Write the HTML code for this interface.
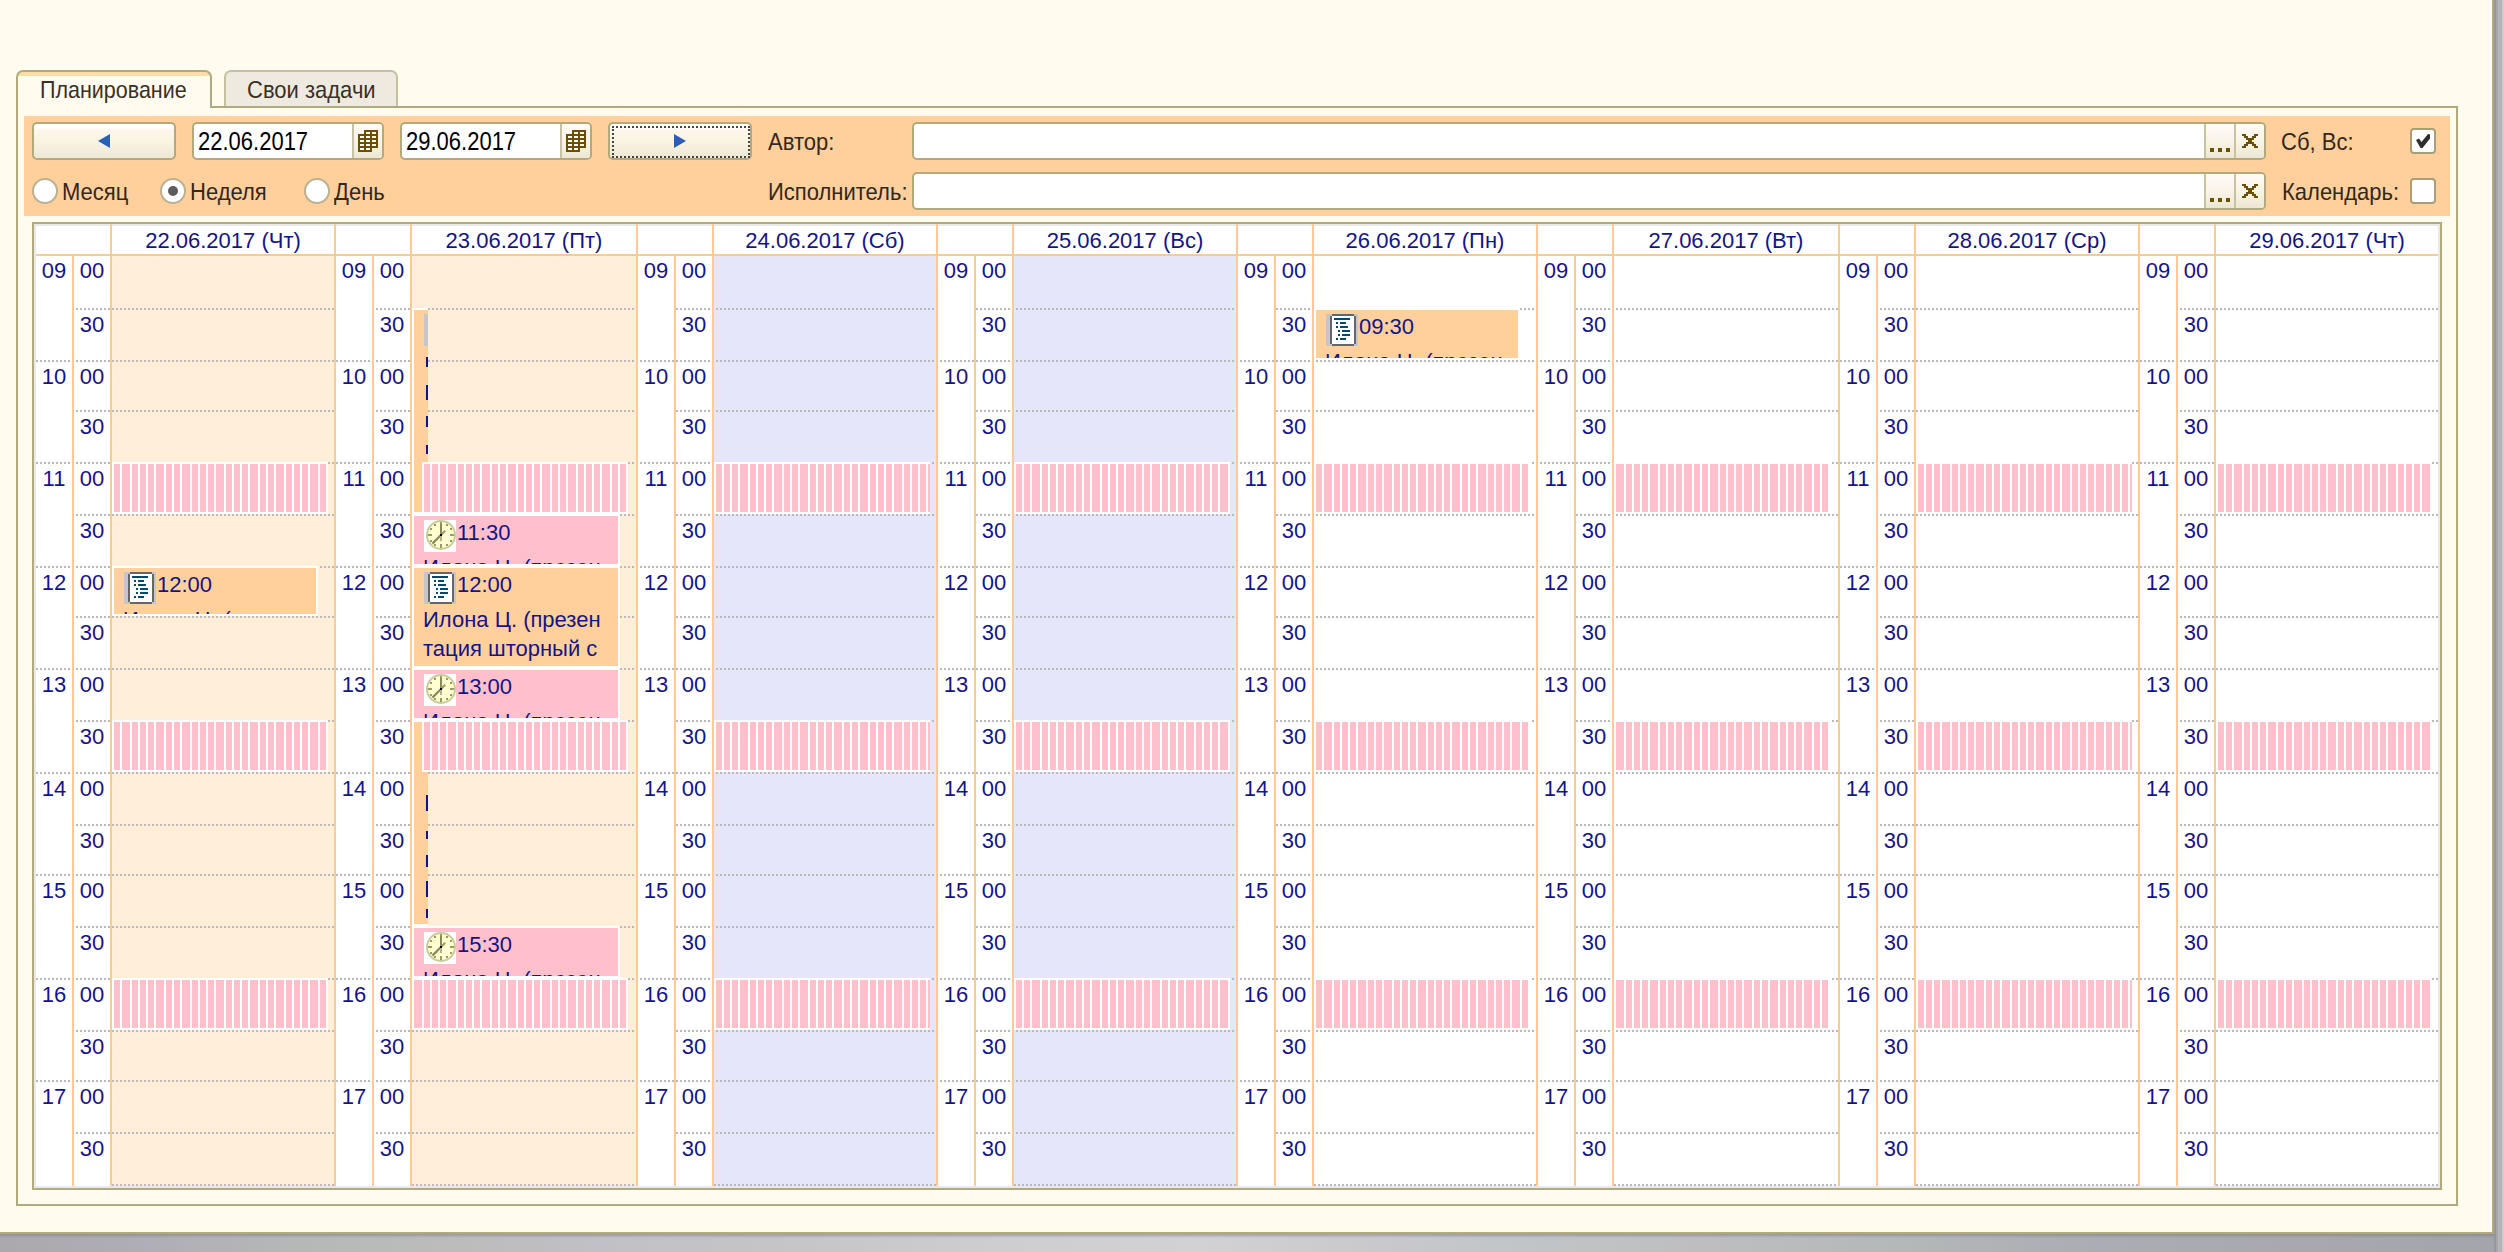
<!DOCTYPE html>
<html lang="ru"><head><meta charset="utf-8"><title>Планирование</title>
<style>
html,body{margin:0;padding:0}
body{width:2504px;height:1252px;position:relative;overflow:hidden;background:#FFFBEE;font-family:"Liberation Sans",sans-serif;font-size:22px;color:#2a2118}
.a{position:absolute}
.v{position:absolute;width:2px;background:#FFC993}
.t{position:absolute;color:#141489;font-size:22px;line-height:26px;text-align:center;white-space:nowrap}
.lbl{position:absolute;font-size:22px;line-height:26px;white-space:nowrap;color:#33281c;transform-origin:0 100%;transform:scaleY(1.1)}
.dots{position:absolute;height:2px;background-image:repeating-linear-gradient(to right,#BABABA 0 2px,transparent 2px 4px)}
.fld{position:absolute;box-sizing:border-box;border:2px solid #B1AA7E;border-radius:5px;background:#fff;height:38px;overflow:hidden}
.btn{position:absolute;box-sizing:border-box;border:2px solid #B1AA7E;border-radius:5px;height:38px;background:linear-gradient(to bottom,#fff 0,#fff 4px,#FFF6EE 5px,#F8F5E2 16px,#F5EFDC 24px,#EDE8D6 33px,#F4F0E2 34px)}
.sb{position:absolute;top:0;height:34px;border-left:2px solid #C9C2A2;background:linear-gradient(to bottom,#FFFBF6 0,#FBF6EC 12px,#F6F1E0 22px,#ECE7D4 34px)}
.ev{position:absolute;box-sizing:border-box;border:2px solid #fff;overflow:hidden;color:#141489;font-size:22px;line-height:28px;white-space:nowrap}
.ev.o{background:#FFCF9C} .ev.p{background:#FFC0CB}
.st{position:absolute;height:52px;box-sizing:border-box;border-top:2px solid #fff;border-bottom:2px solid #fff;width:216px;background-color:#fff}
.ic{position:absolute;left:10px;top:4px;width:32px;height:32px}
.tm{position:absolute;left:43px;top:4px;line-height:26px}
.l2{position:absolute;left:9px;top:38px;line-height:28px}
.rad{position:absolute;box-sizing:border-box;width:26px;height:26px;border-radius:13px;border:2px solid #B9B292;background:#fff}
.chk{position:absolute;box-sizing:border-box;width:26px;height:26px;border-radius:4px;border:2px solid #A89F78;background:#fff}

.s0{background-image:linear-gradient(to right,#fff 0 2px,#FFC0CB 2px 8px,#fff 8px 10px,#FFC0CB 10px 18px,#fff 18px 20px,#FFC0CB 20px 26px,#fff 26px 28px,#FFC0CB 28px 34px,#fff 34px 36px,#FFC0CB 36px 42px,#fff 42px 44px,#FFC0CB 44px 52px,#fff 52px 54px,#FFC0CB 54px 60px,#fff 60px 62px,#FFC0CB 62px 68px,#fff 68px 70px,#FFC0CB 70px 78px,#fff 78px 80px,#FFC0CB 80px 86px,#fff 86px 88px,#FFC0CB 88px 94px,#fff 94px 96px,#FFC0CB 96px 102px,#fff 102px 104px,#FFC0CB 104px 112px,#fff 112px 114px,#FFC0CB 114px 120px,#fff 120px 122px,#FFC0CB 122px 128px,#fff 128px 130px,#FFC0CB 130px 136px,#fff 136px 138px,#FFC0CB 138px 146px,#fff 146px 148px,#FFC0CB 148px 154px,#fff 154px 156px,#FFC0CB 156px 162px,#fff 162px 164px,#FFC0CB 164px 172px,#fff 172px 174px,#FFC0CB 174px 180px,#fff 180px 182px,#FFC0CB 182px 188px,#fff 188px 190px,#FFC0CB 190px 196px,#fff 196px 198px,#FFC0CB 198px 206px,#fff 206px 208px,#FFC0CB 208px 214px,#fff 214px 216px)}
.s1{background-image:linear-gradient(to right,#fff 0 2px,#FFC0CB 2px 10px,#fff 10px 12px,#FFC0CB 12px 18px,#fff 18px 20px,#FFC0CB 20px 26px,#fff 26px 28px,#FFC0CB 28px 34px,#fff 34px 36px,#FFC0CB 36px 44px,#fff 44px 46px,#FFC0CB 46px 52px,#fff 52px 54px,#FFC0CB 54px 60px,#fff 60px 62px,#FFC0CB 62px 68px,#fff 68px 70px,#FFC0CB 70px 78px,#fff 78px 80px,#FFC0CB 80px 86px,#fff 86px 88px,#FFC0CB 88px 94px,#fff 94px 96px,#FFC0CB 96px 104px,#fff 104px 106px,#FFC0CB 106px 112px,#fff 112px 114px,#FFC0CB 114px 120px,#fff 120px 122px,#FFC0CB 122px 128px,#fff 128px 130px,#FFC0CB 130px 138px,#fff 138px 140px,#FFC0CB 140px 146px,#fff 146px 148px,#FFC0CB 148px 154px,#fff 154px 156px,#FFC0CB 156px 164px,#fff 164px 166px,#FFC0CB 166px 172px,#fff 172px 174px,#FFC0CB 174px 180px,#fff 180px 182px,#FFC0CB 182px 188px,#fff 188px 190px,#FFC0CB 190px 198px,#fff 198px 200px,#FFC0CB 200px 206px,#fff 206px 208px,#FFC0CB 208px 214px,#fff 214px 216px)}
.s2{background-image:linear-gradient(to right,#fff 0 2px,#FFC0CB 2px 8px,#fff 8px 10px,#FFC0CB 10px 16px,#fff 16px 18px,#FFC0CB 18px 24px,#fff 24px 26px,#FFC0CB 26px 34px,#fff 34px 36px,#FFC0CB 36px 42px,#fff 42px 44px,#FFC0CB 44px 50px,#fff 50px 52px,#FFC0CB 52px 58px,#fff 58px 60px,#FFC0CB 60px 68px,#fff 68px 70px,#FFC0CB 70px 76px,#fff 76px 78px,#FFC0CB 78px 84px,#fff 84px 86px,#FFC0CB 86px 94px,#fff 94px 96px,#FFC0CB 96px 102px,#fff 102px 104px,#FFC0CB 104px 110px,#fff 110px 112px,#FFC0CB 112px 118px,#fff 118px 120px,#FFC0CB 120px 128px,#fff 128px 130px,#FFC0CB 130px 136px,#fff 136px 138px,#FFC0CB 138px 144px,#fff 144px 146px,#FFC0CB 146px 154px,#fff 154px 156px,#FFC0CB 156px 162px,#fff 162px 164px,#FFC0CB 164px 170px,#fff 170px 172px,#FFC0CB 172px 178px,#fff 178px 180px,#FFC0CB 180px 188px,#fff 188px 190px,#FFC0CB 190px 196px,#fff 196px 198px,#FFC0CB 198px 204px,#fff 204px 206px,#FFC0CB 206px 212px,#fff 212px 214px,#FFC0CB 214px 220px,#fff 220px 222px)}
.s3{background-image:linear-gradient(to right,#fff 0 2px,#FFC0CB 2px 8px,#fff 8px 10px,#FFC0CB 10px 16px,#fff 16px 18px,#FFC0CB 18px 26px,#fff 26px 28px,#FFC0CB 28px 34px,#fff 34px 36px,#FFC0CB 36px 42px,#fff 42px 44px,#FFC0CB 44px 50px,#fff 50px 52px,#FFC0CB 52px 60px,#fff 60px 62px,#FFC0CB 62px 68px,#fff 68px 70px,#FFC0CB 70px 76px,#fff 76px 78px,#FFC0CB 78px 86px,#fff 86px 88px,#FFC0CB 88px 94px,#fff 94px 96px,#FFC0CB 96px 102px,#fff 102px 104px,#FFC0CB 104px 110px,#fff 110px 112px,#FFC0CB 112px 120px,#fff 120px 122px,#FFC0CB 122px 128px,#fff 128px 130px,#FFC0CB 130px 136px,#fff 136px 138px,#FFC0CB 138px 146px,#fff 146px 148px,#FFC0CB 148px 154px,#fff 154px 156px,#FFC0CB 156px 162px,#fff 162px 164px,#FFC0CB 164px 170px,#fff 170px 172px,#FFC0CB 172px 180px,#fff 180px 182px,#FFC0CB 182px 188px,#fff 188px 190px,#FFC0CB 190px 196px,#fff 196px 198px,#FFC0CB 198px 204px,#fff 204px 206px,#FFC0CB 206px 214px,#fff 214px 216px)}
.s4{background-image:linear-gradient(to right,#fff 0 2px,#FFC0CB 2px 8px,#fff 8px 10px,#FFC0CB 10px 18px,#fff 18px 20px,#FFC0CB 20px 26px,#fff 26px 28px,#FFC0CB 28px 34px,#fff 34px 36px,#FFC0CB 36px 42px,#fff 42px 44px,#FFC0CB 44px 52px,#fff 52px 54px,#FFC0CB 54px 60px,#fff 60px 62px,#FFC0CB 62px 68px,#fff 68px 70px,#FFC0CB 70px 78px,#fff 78px 80px,#FFC0CB 80px 86px,#fff 86px 88px,#FFC0CB 88px 94px,#fff 94px 96px,#FFC0CB 96px 102px,#fff 102px 104px,#FFC0CB 104px 112px,#fff 112px 114px,#FFC0CB 114px 120px,#fff 120px 122px,#FFC0CB 122px 128px,#fff 128px 130px,#FFC0CB 130px 136px,#fff 136px 138px,#FFC0CB 138px 146px,#fff 146px 148px,#FFC0CB 148px 154px,#fff 154px 156px,#FFC0CB 156px 162px,#fff 162px 164px,#FFC0CB 164px 172px,#fff 172px 174px,#FFC0CB 174px 180px,#fff 180px 182px,#FFC0CB 182px 188px,#fff 188px 190px,#FFC0CB 190px 196px,#fff 196px 198px,#FFC0CB 198px 206px,#fff 206px 208px,#FFC0CB 208px 214px,#fff 214px 216px)}
.s5{background-image:linear-gradient(to right,#fff 0 2px,#FFC0CB 2px 10px,#fff 10px 12px,#FFC0CB 12px 18px,#fff 18px 20px,#FFC0CB 20px 26px,#fff 26px 28px,#FFC0CB 28px 34px,#fff 34px 36px,#FFC0CB 36px 44px,#fff 44px 46px,#FFC0CB 46px 52px,#fff 52px 54px,#FFC0CB 54px 60px,#fff 60px 62px,#FFC0CB 62px 68px,#fff 68px 70px,#FFC0CB 70px 78px,#fff 78px 80px,#FFC0CB 80px 86px,#fff 86px 88px,#FFC0CB 88px 94px,#fff 94px 96px,#FFC0CB 96px 104px,#fff 104px 106px,#FFC0CB 106px 112px,#fff 112px 114px,#FFC0CB 114px 120px,#fff 120px 122px,#FFC0CB 122px 128px,#fff 128px 130px,#FFC0CB 130px 138px,#fff 138px 140px,#FFC0CB 140px 146px,#fff 146px 148px,#FFC0CB 148px 154px,#fff 154px 156px,#FFC0CB 156px 164px,#fff 164px 166px,#FFC0CB 166px 172px,#fff 172px 174px,#FFC0CB 174px 180px,#fff 180px 182px,#FFC0CB 182px 188px,#fff 188px 190px,#FFC0CB 190px 198px,#fff 198px 200px,#FFC0CB 200px 206px,#fff 206px 208px,#FFC0CB 208px 214px,#fff 214px 216px)}
.s6{background-image:linear-gradient(to right,#fff 0 2px,#FFC0CB 2px 8px,#fff 8px 10px,#FFC0CB 10px 16px,#fff 16px 18px,#FFC0CB 18px 24px,#fff 24px 26px,#FFC0CB 26px 34px,#fff 34px 36px,#FFC0CB 36px 42px,#fff 42px 44px,#FFC0CB 44px 50px,#fff 50px 52px,#FFC0CB 52px 58px,#fff 58px 60px,#FFC0CB 60px 68px,#fff 68px 70px,#FFC0CB 70px 76px,#fff 76px 78px,#FFC0CB 78px 84px,#fff 84px 86px,#FFC0CB 86px 94px,#fff 94px 96px,#FFC0CB 96px 102px,#fff 102px 104px,#FFC0CB 104px 110px,#fff 110px 112px,#FFC0CB 112px 118px,#fff 118px 120px,#FFC0CB 120px 128px,#fff 128px 130px,#FFC0CB 130px 136px,#fff 136px 138px,#FFC0CB 138px 144px,#fff 144px 146px,#FFC0CB 146px 154px,#fff 154px 156px,#FFC0CB 156px 162px,#fff 162px 164px,#FFC0CB 164px 170px,#fff 170px 172px,#FFC0CB 172px 178px,#fff 178px 180px,#FFC0CB 180px 188px,#fff 188px 190px,#FFC0CB 190px 196px,#fff 196px 198px,#FFC0CB 198px 204px,#fff 204px 206px,#FFC0CB 206px 212px,#fff 212px 214px,#FFC0CB 214px 220px,#fff 220px 222px)}
.s7{background-image:linear-gradient(to right,#fff 0 2px,#FFC0CB 2px 8px,#fff 8px 10px,#FFC0CB 10px 16px,#fff 16px 18px,#FFC0CB 18px 26px,#fff 26px 28px,#FFC0CB 28px 34px,#fff 34px 36px,#FFC0CB 36px 42px,#fff 42px 44px,#FFC0CB 44px 50px,#fff 50px 52px,#FFC0CB 52px 60px,#fff 60px 62px,#FFC0CB 62px 68px,#fff 68px 70px,#FFC0CB 70px 76px,#fff 76px 78px,#FFC0CB 78px 86px,#fff 86px 88px,#FFC0CB 88px 94px,#fff 94px 96px,#FFC0CB 96px 102px,#fff 102px 104px,#FFC0CB 104px 110px,#fff 110px 112px,#FFC0CB 112px 120px,#fff 120px 122px,#FFC0CB 122px 128px,#fff 128px 130px,#FFC0CB 130px 136px,#fff 136px 138px,#FFC0CB 138px 146px,#fff 146px 148px,#FFC0CB 148px 154px,#fff 154px 156px,#FFC0CB 156px 162px,#fff 162px 164px,#FFC0CB 164px 170px,#fff 170px 172px,#FFC0CB 172px 180px,#fff 180px 182px,#FFC0CB 182px 188px,#fff 188px 190px,#FFC0CB 190px 196px,#fff 196px 198px,#FFC0CB 198px 204px,#fff 204px 206px,#FFC0CB 206px 214px,#fff 214px 216px)}
</style></head><body>
<div class="a" style="left:0;top:1234px;width:2504px;height:18px;background:linear-gradient(to right,#ABA9AD 0,#B0AEB6 150px,#B6B8B8 300px,#BCBCBC 450px,#C0C0C6 600px,#C6C6C8 800px,#CECED0 1000px,#D2D2D4 1200px,#C8C8CC 1400px,#C2C6C8 1500px,#BEBEC0 1700px,#B4B8B8 1900px,#ACACB4 2100px,#A8A8AE 2300px,#A4A4AC 2504px)"></div>
<div class="a" style="left:0;top:1234px;width:2496px;height:4px;background:linear-gradient(to bottom,rgba(120,120,132,.55),rgba(120,120,132,0))"></div>
<div class="a" style="left:2494px;top:0;width:10px;height:1252px;background:linear-gradient(to right,#96969E 0,#96969E 2px,#A8A8AC 2px,#A8A8AC 4px,#B6B6B6 4px,#B6B6B6 6px,#B0B4B8 6px,#B0B4B8 8px,#CCCCD0 8px)"></div>
<div class="a" style="left:0;top:1232px;width:2494px;height:2px;background:#B1AA7E"></div>
<div class="a" style="left:2492px;top:0;width:2px;height:1234px;background:#B1AA7E"></div>
<div class="a" style="left:16px;top:106px;width:2442px;height:1100px;box-sizing:border-box;border:2px solid #B1AA7E"></div>
<div class="a" style="left:224px;top:70px;width:174px;height:36px;box-sizing:border-box;border:2px solid #C6BFA0;border-bottom:none;border-radius:7px 7px 0 0;background:#EEEADF"></div>
<div class="lbl" style="left:247px;top:79px;color:#3a3026">Свои задачи</div>
<div class="a" style="left:16px;top:70px;width:196px;height:38px;box-sizing:border-box;border:2px solid #B1AA7E;border-bottom:none;border-radius:7px 7px 0 0;background:linear-gradient(to bottom,#FFDDA6 0,#FFDDA6 4px,#FFFBEE 4px);"></div>
<div class="a" style="left:18px;top:106px;width:192px;height:2px;background:#FFFBEE"></div>
<div class="lbl" style="left:40px;top:79px;color:#3a3026;transform:scale(0.977,1.1)">Планирование</div>
<div class="a" style="left:24px;top:116px;width:2426px;height:100px;background:#FFCF9C"></div>
<div class="btn" style="left:32px;top:122px;width:144px"></div>
<svg class="a" style="left:98px;top:134px" width="12" height="14" viewBox="0 0 12 14"><path d="M12 0V14L0 7Z" fill="#2C5EB8"/></svg>
<div class="fld" style="left:192px;top:122px;width:192px"><div class="lbl" style="left:4px;top:7px;color:#000;transform:scaleY(1.14)">22.06.2017</div><div class="sb" style="left:158px;width:30px"></div>
<svg class="a" style="left:164px;top:6px" width="20" height="22" viewBox="0 0 10 11" shape-rendering="crispEdges"><path fill="#6B4E00" d="M3 0h7v9h-3v2h-7v-9h3z"/><rect x="4" y="1" width="2" height="1" fill="#FFFDF6"/><rect x="7" y="1" width="2" height="1" fill="#FFFDF6"/><rect x="1" y="3" width="2" height="1" fill="#FFFDF6"/><rect x="4" y="3" width="2" height="1" fill="#FFFDF6"/><rect x="7" y="3" width="2" height="1" fill="#FFFDF6"/><rect x="1" y="5" width="2" height="1" fill="#FFFDF6"/><rect x="4" y="5" width="2" height="1" fill="#FFFDF6"/><rect x="7" y="5" width="2" height="1" fill="#FFFDF6"/><rect x="1" y="7" width="2" height="1" fill="#FFFDF6"/><rect x="4" y="7" width="2" height="1" fill="#FFFDF6"/><rect x="7" y="7" width="2" height="1" fill="#FFFDF6"/><rect x="1" y="9" width="2" height="1" fill="#FFFDF6"/><rect x="4" y="9" width="2" height="1" fill="#FFFDF6"/></svg></div>
<div class="fld" style="left:400px;top:122px;width:192px"><div class="lbl" style="left:4px;top:7px;color:#000;transform:scaleY(1.14)">29.06.2017</div><div class="sb" style="left:158px;width:30px"></div>
<svg class="a" style="left:164px;top:6px" width="20" height="22" viewBox="0 0 10 11" shape-rendering="crispEdges"><path fill="#6B4E00" d="M3 0h7v9h-3v2h-7v-9h3z"/><rect x="4" y="1" width="2" height="1" fill="#FFFDF6"/><rect x="7" y="1" width="2" height="1" fill="#FFFDF6"/><rect x="1" y="3" width="2" height="1" fill="#FFFDF6"/><rect x="4" y="3" width="2" height="1" fill="#FFFDF6"/><rect x="7" y="3" width="2" height="1" fill="#FFFDF6"/><rect x="1" y="5" width="2" height="1" fill="#FFFDF6"/><rect x="4" y="5" width="2" height="1" fill="#FFFDF6"/><rect x="7" y="5" width="2" height="1" fill="#FFFDF6"/><rect x="1" y="7" width="2" height="1" fill="#FFFDF6"/><rect x="4" y="7" width="2" height="1" fill="#FFFDF6"/><rect x="7" y="7" width="2" height="1" fill="#FFFDF6"/><rect x="1" y="9" width="2" height="1" fill="#FFFDF6"/><rect x="4" y="9" width="2" height="1" fill="#FFFDF6"/></svg></div>
<div class="btn" style="left:608px;top:122px;width:144px"><div class="a" style="left:2px;top:2px;width:134px;height:28px;border:2px dotted #444"></div></div>
<svg class="a" style="left:674px;top:134px" width="12" height="14" viewBox="0 0 12 14"><path d="M0 0V14L12 7Z" fill="#2C5EB8"/></svg>
<div class="lbl" style="left:768px;top:131px">Автор:</div>
<div class="lbl" style="left:768px;top:181px">Исполнитель:</div>
<div class="fld" style="left:912px;top:122px;width:1354px"><div class="sb" style="left:1290px;width:28px"></div><div class="sb" style="left:1320px;width:30px"></div><div class="a" style="left:1296px;top:24px;width:4px;height:4px;background:#6B5000"></div><div class="a" style="left:1304px;top:24px;width:4px;height:4px;background:#6B5000"></div><div class="a" style="left:1312px;top:24px;width:4px;height:4px;background:#6B5000"></div><svg class="a" style="left:1328px;top:10px" width="16" height="14" viewBox="0 0 8 7" shape-rendering="crispEdges"><path fill="#6B5000" d="M0 0h2v1h-2zM6 0h2v1h-2zM1 1h2v1h-2zM5 1h2v1h-2zM2 2h4v1h-4zM3 3h2v1h-2zM2 4h4v1h-4zM1 5h2v1h-2zM5 5h2v1h-2zM0 6h2v1h-2zM6 6h2v1h-2z"/></svg></div>
<div class="fld" style="left:912px;top:172px;width:1354px"><div class="sb" style="left:1290px;width:28px"></div><div class="sb" style="left:1320px;width:30px"></div><div class="a" style="left:1296px;top:24px;width:4px;height:4px;background:#6B5000"></div><div class="a" style="left:1304px;top:24px;width:4px;height:4px;background:#6B5000"></div><div class="a" style="left:1312px;top:24px;width:4px;height:4px;background:#6B5000"></div><svg class="a" style="left:1328px;top:10px" width="16" height="14" viewBox="0 0 8 7" shape-rendering="crispEdges"><path fill="#6B5000" d="M0 0h2v1h-2zM6 0h2v1h-2zM1 1h2v1h-2zM5 1h2v1h-2zM2 2h4v1h-4zM3 3h2v1h-2zM2 4h4v1h-4zM1 5h2v1h-2zM5 5h2v1h-2zM0 6h2v1h-2zM6 6h2v1h-2z"/></svg></div>
<div class="lbl" style="left:2281px;top:131px">Сб, Вс:</div>
<div class="lbl" style="left:2282px;top:181px">Календарь:</div>
<div class="chk" style="left:2410px;top:128px"><svg class="a" style="left:4px;top:4px" width="14" height="14" viewBox="0 0 14 14"><path d="M0 6L3 4.5L5.5 8L12 0L14 0.5L14 4.5L6.5 14L4.5 14Z" fill="#2e2e30"/></svg></div>
<div class="chk" style="left:2410px;top:178px"></div>
<div class="rad" style="left:32px;top:178px"></div><div class="lbl" style="left:62px;top:181px">Месяц</div>
<div class="rad" style="left:160px;top:178px"><div class="a" style="left:6px;top:6px;width:10px;height:10px;border-radius:5px;background:#5c5c5e"></div></div><div class="lbl" style="left:190px;top:181px">Неделя</div>
<div class="rad" style="left:304px;top:178px"></div><div class="lbl" style="left:334px;top:181px">День</div>
<div class="a" style="left:32px;top:222px;width:2410px;height:968px;background:#B1AA7E"></div>
<div class="a" style="left:34px;top:224px;width:2406px;height:964px;background:#E9E9EB"></div>
<div class="a" style="left:36px;top:226px;width:2402px;height:960px;background:#fff"></div>
<div class="a" style="left:112px;top:256px;width:222px;height:930px;background:#FFEFD8"></div>
<div class="a" style="left:412px;top:256px;width:224px;height:930px;background:#FFEFD8"></div>
<div class="a" style="left:714px;top:256px;width:222px;height:930px;background:#E6E6FA"></div>
<div class="a" style="left:1014px;top:256px;width:222px;height:930px;background:#E6E6FA"></div>
<div class="dots" style="left:76px;top:308px;width:258px"></div>
<div class="dots" style="left:376px;top:308px;width:260px"></div>
<div class="dots" style="left:676px;top:308px;width:260px"></div>
<div class="dots" style="left:976px;top:308px;width:260px"></div>
<div class="dots" style="left:1276px;top:308px;width:260px"></div>
<div class="dots" style="left:1576px;top:308px;width:262px"></div>
<div class="dots" style="left:1880px;top:308px;width:258px"></div>
<div class="dots" style="left:2180px;top:308px;width:258px"></div>
<div class="dots" style="left:36px;top:360px;width:298px"></div>
<div class="dots" style="left:336px;top:360px;width:300px"></div>
<div class="dots" style="left:640px;top:360px;width:296px"></div>
<div class="dots" style="left:940px;top:360px;width:296px"></div>
<div class="dots" style="left:1240px;top:360px;width:296px"></div>
<div class="dots" style="left:1540px;top:360px;width:298px"></div>
<div class="dots" style="left:1840px;top:360px;width:298px"></div>
<div class="dots" style="left:2140px;top:360px;width:298px"></div>
<div class="dots" style="left:76px;top:410px;width:258px"></div>
<div class="dots" style="left:376px;top:410px;width:260px"></div>
<div class="dots" style="left:676px;top:410px;width:260px"></div>
<div class="dots" style="left:976px;top:410px;width:260px"></div>
<div class="dots" style="left:1276px;top:410px;width:260px"></div>
<div class="dots" style="left:1576px;top:410px;width:262px"></div>
<div class="dots" style="left:1880px;top:410px;width:258px"></div>
<div class="dots" style="left:2180px;top:410px;width:258px"></div>
<div class="dots" style="left:36px;top:462px;width:298px"></div>
<div class="dots" style="left:336px;top:462px;width:300px"></div>
<div class="dots" style="left:640px;top:462px;width:296px"></div>
<div class="dots" style="left:940px;top:462px;width:296px"></div>
<div class="dots" style="left:1240px;top:462px;width:296px"></div>
<div class="dots" style="left:1540px;top:462px;width:298px"></div>
<div class="dots" style="left:1840px;top:462px;width:298px"></div>
<div class="dots" style="left:2140px;top:462px;width:298px"></div>
<div class="dots" style="left:76px;top:514px;width:258px"></div>
<div class="dots" style="left:376px;top:514px;width:260px"></div>
<div class="dots" style="left:676px;top:514px;width:260px"></div>
<div class="dots" style="left:976px;top:514px;width:260px"></div>
<div class="dots" style="left:1276px;top:514px;width:260px"></div>
<div class="dots" style="left:1576px;top:514px;width:262px"></div>
<div class="dots" style="left:1880px;top:514px;width:258px"></div>
<div class="dots" style="left:2180px;top:514px;width:258px"></div>
<div class="dots" style="left:36px;top:566px;width:298px"></div>
<div class="dots" style="left:336px;top:566px;width:300px"></div>
<div class="dots" style="left:640px;top:566px;width:296px"></div>
<div class="dots" style="left:940px;top:566px;width:296px"></div>
<div class="dots" style="left:1240px;top:566px;width:296px"></div>
<div class="dots" style="left:1540px;top:566px;width:298px"></div>
<div class="dots" style="left:1840px;top:566px;width:298px"></div>
<div class="dots" style="left:2140px;top:566px;width:298px"></div>
<div class="dots" style="left:76px;top:616px;width:258px"></div>
<div class="dots" style="left:376px;top:616px;width:260px"></div>
<div class="dots" style="left:676px;top:616px;width:260px"></div>
<div class="dots" style="left:976px;top:616px;width:260px"></div>
<div class="dots" style="left:1276px;top:616px;width:260px"></div>
<div class="dots" style="left:1576px;top:616px;width:262px"></div>
<div class="dots" style="left:1880px;top:616px;width:258px"></div>
<div class="dots" style="left:2180px;top:616px;width:258px"></div>
<div class="dots" style="left:36px;top:668px;width:298px"></div>
<div class="dots" style="left:336px;top:668px;width:300px"></div>
<div class="dots" style="left:640px;top:668px;width:296px"></div>
<div class="dots" style="left:940px;top:668px;width:296px"></div>
<div class="dots" style="left:1240px;top:668px;width:296px"></div>
<div class="dots" style="left:1540px;top:668px;width:298px"></div>
<div class="dots" style="left:1840px;top:668px;width:298px"></div>
<div class="dots" style="left:2140px;top:668px;width:298px"></div>
<div class="dots" style="left:76px;top:720px;width:258px"></div>
<div class="dots" style="left:376px;top:720px;width:260px"></div>
<div class="dots" style="left:676px;top:720px;width:260px"></div>
<div class="dots" style="left:976px;top:720px;width:260px"></div>
<div class="dots" style="left:1276px;top:720px;width:260px"></div>
<div class="dots" style="left:1576px;top:720px;width:262px"></div>
<div class="dots" style="left:1880px;top:720px;width:258px"></div>
<div class="dots" style="left:2180px;top:720px;width:258px"></div>
<div class="dots" style="left:36px;top:772px;width:298px"></div>
<div class="dots" style="left:336px;top:772px;width:300px"></div>
<div class="dots" style="left:640px;top:772px;width:296px"></div>
<div class="dots" style="left:940px;top:772px;width:296px"></div>
<div class="dots" style="left:1240px;top:772px;width:296px"></div>
<div class="dots" style="left:1540px;top:772px;width:298px"></div>
<div class="dots" style="left:1840px;top:772px;width:298px"></div>
<div class="dots" style="left:2140px;top:772px;width:298px"></div>
<div class="dots" style="left:76px;top:824px;width:258px"></div>
<div class="dots" style="left:376px;top:824px;width:260px"></div>
<div class="dots" style="left:676px;top:824px;width:260px"></div>
<div class="dots" style="left:976px;top:824px;width:260px"></div>
<div class="dots" style="left:1276px;top:824px;width:260px"></div>
<div class="dots" style="left:1576px;top:824px;width:262px"></div>
<div class="dots" style="left:1880px;top:824px;width:258px"></div>
<div class="dots" style="left:2180px;top:824px;width:258px"></div>
<div class="dots" style="left:36px;top:874px;width:298px"></div>
<div class="dots" style="left:336px;top:874px;width:300px"></div>
<div class="dots" style="left:640px;top:874px;width:296px"></div>
<div class="dots" style="left:940px;top:874px;width:296px"></div>
<div class="dots" style="left:1240px;top:874px;width:296px"></div>
<div class="dots" style="left:1540px;top:874px;width:298px"></div>
<div class="dots" style="left:1840px;top:874px;width:298px"></div>
<div class="dots" style="left:2140px;top:874px;width:298px"></div>
<div class="dots" style="left:76px;top:926px;width:258px"></div>
<div class="dots" style="left:376px;top:926px;width:260px"></div>
<div class="dots" style="left:676px;top:926px;width:260px"></div>
<div class="dots" style="left:976px;top:926px;width:260px"></div>
<div class="dots" style="left:1276px;top:926px;width:260px"></div>
<div class="dots" style="left:1576px;top:926px;width:262px"></div>
<div class="dots" style="left:1880px;top:926px;width:258px"></div>
<div class="dots" style="left:2180px;top:926px;width:258px"></div>
<div class="dots" style="left:36px;top:978px;width:298px"></div>
<div class="dots" style="left:336px;top:978px;width:300px"></div>
<div class="dots" style="left:640px;top:978px;width:296px"></div>
<div class="dots" style="left:940px;top:978px;width:296px"></div>
<div class="dots" style="left:1240px;top:978px;width:296px"></div>
<div class="dots" style="left:1540px;top:978px;width:298px"></div>
<div class="dots" style="left:1840px;top:978px;width:298px"></div>
<div class="dots" style="left:2140px;top:978px;width:298px"></div>
<div class="dots" style="left:76px;top:1030px;width:258px"></div>
<div class="dots" style="left:376px;top:1030px;width:260px"></div>
<div class="dots" style="left:676px;top:1030px;width:260px"></div>
<div class="dots" style="left:976px;top:1030px;width:260px"></div>
<div class="dots" style="left:1276px;top:1030px;width:260px"></div>
<div class="dots" style="left:1576px;top:1030px;width:262px"></div>
<div class="dots" style="left:1880px;top:1030px;width:258px"></div>
<div class="dots" style="left:2180px;top:1030px;width:258px"></div>
<div class="dots" style="left:36px;top:1080px;width:298px"></div>
<div class="dots" style="left:336px;top:1080px;width:300px"></div>
<div class="dots" style="left:640px;top:1080px;width:296px"></div>
<div class="dots" style="left:940px;top:1080px;width:296px"></div>
<div class="dots" style="left:1240px;top:1080px;width:296px"></div>
<div class="dots" style="left:1540px;top:1080px;width:298px"></div>
<div class="dots" style="left:1840px;top:1080px;width:298px"></div>
<div class="dots" style="left:2140px;top:1080px;width:298px"></div>
<div class="dots" style="left:76px;top:1132px;width:258px"></div>
<div class="dots" style="left:376px;top:1132px;width:260px"></div>
<div class="dots" style="left:676px;top:1132px;width:260px"></div>
<div class="dots" style="left:976px;top:1132px;width:260px"></div>
<div class="dots" style="left:1276px;top:1132px;width:260px"></div>
<div class="dots" style="left:1576px;top:1132px;width:262px"></div>
<div class="dots" style="left:1880px;top:1132px;width:258px"></div>
<div class="dots" style="left:2180px;top:1132px;width:258px"></div>
<div class="dots" style="left:112px;top:1184px;width:222px"></div>
<div class="dots" style="left:412px;top:1184px;width:224px"></div>
<div class="dots" style="left:714px;top:1184px;width:222px"></div>
<div class="dots" style="left:1014px;top:1184px;width:222px"></div>
<div class="dots" style="left:1314px;top:1184px;width:222px"></div>
<div class="dots" style="left:1614px;top:1184px;width:224px"></div>
<div class="dots" style="left:1916px;top:1184px;width:222px"></div>
<div class="dots" style="left:2216px;top:1184px;width:222px"></div>
<div class="a" style="left:36px;top:254px;width:2402px;height:2px;background:#FFC993"></div>
<div class="v" style="left:72px;top:256px;height:930px"></div>
<div class="v" style="left:110px;top:224px;height:962px"></div>
<div class="v" style="left:334px;top:224px;height:962px"></div>
<div class="v" style="left:372px;top:256px;height:930px"></div>
<div class="v" style="left:410px;top:224px;height:962px"></div>
<div class="v" style="left:636px;top:224px;height:962px"></div>
<div class="v" style="left:674px;top:256px;height:930px"></div>
<div class="v" style="left:712px;top:224px;height:962px"></div>
<div class="v" style="left:936px;top:224px;height:962px"></div>
<div class="v" style="left:974px;top:256px;height:930px"></div>
<div class="v" style="left:1012px;top:224px;height:962px"></div>
<div class="v" style="left:1236px;top:224px;height:962px"></div>
<div class="v" style="left:1274px;top:256px;height:930px"></div>
<div class="v" style="left:1312px;top:224px;height:962px"></div>
<div class="v" style="left:1536px;top:224px;height:962px"></div>
<div class="v" style="left:1574px;top:256px;height:930px"></div>
<div class="v" style="left:1612px;top:224px;height:962px"></div>
<div class="v" style="left:1838px;top:224px;height:962px"></div>
<div class="v" style="left:1876px;top:256px;height:930px"></div>
<div class="v" style="left:1914px;top:224px;height:962px"></div>
<div class="v" style="left:2138px;top:224px;height:962px"></div>
<div class="v" style="left:2176px;top:256px;height:930px"></div>
<div class="v" style="left:2214px;top:224px;height:962px"></div>
<div class="t" style="left:112px;top:228px;width:222px">22.06.2017 (Чт)</div>
<div class="t" style="left:412px;top:228px;width:224px">23.06.2017 (Пт)</div>
<div class="t" style="left:714px;top:228px;width:222px">24.06.2017 (Сб)</div>
<div class="t" style="left:1014px;top:228px;width:222px">25.06.2017 (Вс)</div>
<div class="t" style="left:1314px;top:228px;width:222px">26.06.2017 (Пн)</div>
<div class="t" style="left:1614px;top:228px;width:224px">27.06.2017 (Вт)</div>
<div class="t" style="left:1916px;top:228px;width:222px">28.06.2017 (Ср)</div>
<div class="t" style="left:2216px;top:228px;width:222px">29.06.2017 (Чт)</div>
<div class="t" style="left:36px;top:258px;width:36px">09</div>
<div class="t" style="left:74px;top:258px;width:36px">00</div>
<div class="t" style="left:336px;top:258px;width:36px">09</div>
<div class="t" style="left:374px;top:258px;width:36px">00</div>
<div class="t" style="left:638px;top:258px;width:36px">09</div>
<div class="t" style="left:676px;top:258px;width:36px">00</div>
<div class="t" style="left:938px;top:258px;width:36px">09</div>
<div class="t" style="left:976px;top:258px;width:36px">00</div>
<div class="t" style="left:1238px;top:258px;width:36px">09</div>
<div class="t" style="left:1276px;top:258px;width:36px">00</div>
<div class="t" style="left:1538px;top:258px;width:36px">09</div>
<div class="t" style="left:1576px;top:258px;width:36px">00</div>
<div class="t" style="left:1840px;top:258px;width:36px">09</div>
<div class="t" style="left:1878px;top:258px;width:36px">00</div>
<div class="t" style="left:2140px;top:258px;width:36px">09</div>
<div class="t" style="left:2178px;top:258px;width:36px">00</div>
<div class="t" style="left:74px;top:312px;width:36px">30</div>
<div class="t" style="left:374px;top:312px;width:36px">30</div>
<div class="t" style="left:676px;top:312px;width:36px">30</div>
<div class="t" style="left:976px;top:312px;width:36px">30</div>
<div class="t" style="left:1276px;top:312px;width:36px">30</div>
<div class="t" style="left:1576px;top:312px;width:36px">30</div>
<div class="t" style="left:1878px;top:312px;width:36px">30</div>
<div class="t" style="left:2178px;top:312px;width:36px">30</div>
<div class="t" style="left:36px;top:364px;width:36px">10</div>
<div class="t" style="left:74px;top:364px;width:36px">00</div>
<div class="t" style="left:336px;top:364px;width:36px">10</div>
<div class="t" style="left:374px;top:364px;width:36px">00</div>
<div class="t" style="left:638px;top:364px;width:36px">10</div>
<div class="t" style="left:676px;top:364px;width:36px">00</div>
<div class="t" style="left:938px;top:364px;width:36px">10</div>
<div class="t" style="left:976px;top:364px;width:36px">00</div>
<div class="t" style="left:1238px;top:364px;width:36px">10</div>
<div class="t" style="left:1276px;top:364px;width:36px">00</div>
<div class="t" style="left:1538px;top:364px;width:36px">10</div>
<div class="t" style="left:1576px;top:364px;width:36px">00</div>
<div class="t" style="left:1840px;top:364px;width:36px">10</div>
<div class="t" style="left:1878px;top:364px;width:36px">00</div>
<div class="t" style="left:2140px;top:364px;width:36px">10</div>
<div class="t" style="left:2178px;top:364px;width:36px">00</div>
<div class="t" style="left:74px;top:414px;width:36px">30</div>
<div class="t" style="left:374px;top:414px;width:36px">30</div>
<div class="t" style="left:676px;top:414px;width:36px">30</div>
<div class="t" style="left:976px;top:414px;width:36px">30</div>
<div class="t" style="left:1276px;top:414px;width:36px">30</div>
<div class="t" style="left:1576px;top:414px;width:36px">30</div>
<div class="t" style="left:1878px;top:414px;width:36px">30</div>
<div class="t" style="left:2178px;top:414px;width:36px">30</div>
<div class="t" style="left:36px;top:466px;width:36px">11</div>
<div class="t" style="left:74px;top:466px;width:36px">00</div>
<div class="t" style="left:336px;top:466px;width:36px">11</div>
<div class="t" style="left:374px;top:466px;width:36px">00</div>
<div class="t" style="left:638px;top:466px;width:36px">11</div>
<div class="t" style="left:676px;top:466px;width:36px">00</div>
<div class="t" style="left:938px;top:466px;width:36px">11</div>
<div class="t" style="left:976px;top:466px;width:36px">00</div>
<div class="t" style="left:1238px;top:466px;width:36px">11</div>
<div class="t" style="left:1276px;top:466px;width:36px">00</div>
<div class="t" style="left:1538px;top:466px;width:36px">11</div>
<div class="t" style="left:1576px;top:466px;width:36px">00</div>
<div class="t" style="left:1840px;top:466px;width:36px">11</div>
<div class="t" style="left:1878px;top:466px;width:36px">00</div>
<div class="t" style="left:2140px;top:466px;width:36px">11</div>
<div class="t" style="left:2178px;top:466px;width:36px">00</div>
<div class="t" style="left:74px;top:518px;width:36px">30</div>
<div class="t" style="left:374px;top:518px;width:36px">30</div>
<div class="t" style="left:676px;top:518px;width:36px">30</div>
<div class="t" style="left:976px;top:518px;width:36px">30</div>
<div class="t" style="left:1276px;top:518px;width:36px">30</div>
<div class="t" style="left:1576px;top:518px;width:36px">30</div>
<div class="t" style="left:1878px;top:518px;width:36px">30</div>
<div class="t" style="left:2178px;top:518px;width:36px">30</div>
<div class="t" style="left:36px;top:570px;width:36px">12</div>
<div class="t" style="left:74px;top:570px;width:36px">00</div>
<div class="t" style="left:336px;top:570px;width:36px">12</div>
<div class="t" style="left:374px;top:570px;width:36px">00</div>
<div class="t" style="left:638px;top:570px;width:36px">12</div>
<div class="t" style="left:676px;top:570px;width:36px">00</div>
<div class="t" style="left:938px;top:570px;width:36px">12</div>
<div class="t" style="left:976px;top:570px;width:36px">00</div>
<div class="t" style="left:1238px;top:570px;width:36px">12</div>
<div class="t" style="left:1276px;top:570px;width:36px">00</div>
<div class="t" style="left:1538px;top:570px;width:36px">12</div>
<div class="t" style="left:1576px;top:570px;width:36px">00</div>
<div class="t" style="left:1840px;top:570px;width:36px">12</div>
<div class="t" style="left:1878px;top:570px;width:36px">00</div>
<div class="t" style="left:2140px;top:570px;width:36px">12</div>
<div class="t" style="left:2178px;top:570px;width:36px">00</div>
<div class="t" style="left:74px;top:620px;width:36px">30</div>
<div class="t" style="left:374px;top:620px;width:36px">30</div>
<div class="t" style="left:676px;top:620px;width:36px">30</div>
<div class="t" style="left:976px;top:620px;width:36px">30</div>
<div class="t" style="left:1276px;top:620px;width:36px">30</div>
<div class="t" style="left:1576px;top:620px;width:36px">30</div>
<div class="t" style="left:1878px;top:620px;width:36px">30</div>
<div class="t" style="left:2178px;top:620px;width:36px">30</div>
<div class="t" style="left:36px;top:672px;width:36px">13</div>
<div class="t" style="left:74px;top:672px;width:36px">00</div>
<div class="t" style="left:336px;top:672px;width:36px">13</div>
<div class="t" style="left:374px;top:672px;width:36px">00</div>
<div class="t" style="left:638px;top:672px;width:36px">13</div>
<div class="t" style="left:676px;top:672px;width:36px">00</div>
<div class="t" style="left:938px;top:672px;width:36px">13</div>
<div class="t" style="left:976px;top:672px;width:36px">00</div>
<div class="t" style="left:1238px;top:672px;width:36px">13</div>
<div class="t" style="left:1276px;top:672px;width:36px">00</div>
<div class="t" style="left:1538px;top:672px;width:36px">13</div>
<div class="t" style="left:1576px;top:672px;width:36px">00</div>
<div class="t" style="left:1840px;top:672px;width:36px">13</div>
<div class="t" style="left:1878px;top:672px;width:36px">00</div>
<div class="t" style="left:2140px;top:672px;width:36px">13</div>
<div class="t" style="left:2178px;top:672px;width:36px">00</div>
<div class="t" style="left:74px;top:724px;width:36px">30</div>
<div class="t" style="left:374px;top:724px;width:36px">30</div>
<div class="t" style="left:676px;top:724px;width:36px">30</div>
<div class="t" style="left:976px;top:724px;width:36px">30</div>
<div class="t" style="left:1276px;top:724px;width:36px">30</div>
<div class="t" style="left:1576px;top:724px;width:36px">30</div>
<div class="t" style="left:1878px;top:724px;width:36px">30</div>
<div class="t" style="left:2178px;top:724px;width:36px">30</div>
<div class="t" style="left:36px;top:776px;width:36px">14</div>
<div class="t" style="left:74px;top:776px;width:36px">00</div>
<div class="t" style="left:336px;top:776px;width:36px">14</div>
<div class="t" style="left:374px;top:776px;width:36px">00</div>
<div class="t" style="left:638px;top:776px;width:36px">14</div>
<div class="t" style="left:676px;top:776px;width:36px">00</div>
<div class="t" style="left:938px;top:776px;width:36px">14</div>
<div class="t" style="left:976px;top:776px;width:36px">00</div>
<div class="t" style="left:1238px;top:776px;width:36px">14</div>
<div class="t" style="left:1276px;top:776px;width:36px">00</div>
<div class="t" style="left:1538px;top:776px;width:36px">14</div>
<div class="t" style="left:1576px;top:776px;width:36px">00</div>
<div class="t" style="left:1840px;top:776px;width:36px">14</div>
<div class="t" style="left:1878px;top:776px;width:36px">00</div>
<div class="t" style="left:2140px;top:776px;width:36px">14</div>
<div class="t" style="left:2178px;top:776px;width:36px">00</div>
<div class="t" style="left:74px;top:828px;width:36px">30</div>
<div class="t" style="left:374px;top:828px;width:36px">30</div>
<div class="t" style="left:676px;top:828px;width:36px">30</div>
<div class="t" style="left:976px;top:828px;width:36px">30</div>
<div class="t" style="left:1276px;top:828px;width:36px">30</div>
<div class="t" style="left:1576px;top:828px;width:36px">30</div>
<div class="t" style="left:1878px;top:828px;width:36px">30</div>
<div class="t" style="left:2178px;top:828px;width:36px">30</div>
<div class="t" style="left:36px;top:878px;width:36px">15</div>
<div class="t" style="left:74px;top:878px;width:36px">00</div>
<div class="t" style="left:336px;top:878px;width:36px">15</div>
<div class="t" style="left:374px;top:878px;width:36px">00</div>
<div class="t" style="left:638px;top:878px;width:36px">15</div>
<div class="t" style="left:676px;top:878px;width:36px">00</div>
<div class="t" style="left:938px;top:878px;width:36px">15</div>
<div class="t" style="left:976px;top:878px;width:36px">00</div>
<div class="t" style="left:1238px;top:878px;width:36px">15</div>
<div class="t" style="left:1276px;top:878px;width:36px">00</div>
<div class="t" style="left:1538px;top:878px;width:36px">15</div>
<div class="t" style="left:1576px;top:878px;width:36px">00</div>
<div class="t" style="left:1840px;top:878px;width:36px">15</div>
<div class="t" style="left:1878px;top:878px;width:36px">00</div>
<div class="t" style="left:2140px;top:878px;width:36px">15</div>
<div class="t" style="left:2178px;top:878px;width:36px">00</div>
<div class="t" style="left:74px;top:930px;width:36px">30</div>
<div class="t" style="left:374px;top:930px;width:36px">30</div>
<div class="t" style="left:676px;top:930px;width:36px">30</div>
<div class="t" style="left:976px;top:930px;width:36px">30</div>
<div class="t" style="left:1276px;top:930px;width:36px">30</div>
<div class="t" style="left:1576px;top:930px;width:36px">30</div>
<div class="t" style="left:1878px;top:930px;width:36px">30</div>
<div class="t" style="left:2178px;top:930px;width:36px">30</div>
<div class="t" style="left:36px;top:982px;width:36px">16</div>
<div class="t" style="left:74px;top:982px;width:36px">00</div>
<div class="t" style="left:336px;top:982px;width:36px">16</div>
<div class="t" style="left:374px;top:982px;width:36px">00</div>
<div class="t" style="left:638px;top:982px;width:36px">16</div>
<div class="t" style="left:676px;top:982px;width:36px">00</div>
<div class="t" style="left:938px;top:982px;width:36px">16</div>
<div class="t" style="left:976px;top:982px;width:36px">00</div>
<div class="t" style="left:1238px;top:982px;width:36px">16</div>
<div class="t" style="left:1276px;top:982px;width:36px">00</div>
<div class="t" style="left:1538px;top:982px;width:36px">16</div>
<div class="t" style="left:1576px;top:982px;width:36px">00</div>
<div class="t" style="left:1840px;top:982px;width:36px">16</div>
<div class="t" style="left:1878px;top:982px;width:36px">00</div>
<div class="t" style="left:2140px;top:982px;width:36px">16</div>
<div class="t" style="left:2178px;top:982px;width:36px">00</div>
<div class="t" style="left:74px;top:1034px;width:36px">30</div>
<div class="t" style="left:374px;top:1034px;width:36px">30</div>
<div class="t" style="left:676px;top:1034px;width:36px">30</div>
<div class="t" style="left:976px;top:1034px;width:36px">30</div>
<div class="t" style="left:1276px;top:1034px;width:36px">30</div>
<div class="t" style="left:1576px;top:1034px;width:36px">30</div>
<div class="t" style="left:1878px;top:1034px;width:36px">30</div>
<div class="t" style="left:2178px;top:1034px;width:36px">30</div>
<div class="t" style="left:36px;top:1084px;width:36px">17</div>
<div class="t" style="left:74px;top:1084px;width:36px">00</div>
<div class="t" style="left:336px;top:1084px;width:36px">17</div>
<div class="t" style="left:374px;top:1084px;width:36px">00</div>
<div class="t" style="left:638px;top:1084px;width:36px">17</div>
<div class="t" style="left:676px;top:1084px;width:36px">00</div>
<div class="t" style="left:938px;top:1084px;width:36px">17</div>
<div class="t" style="left:976px;top:1084px;width:36px">00</div>
<div class="t" style="left:1238px;top:1084px;width:36px">17</div>
<div class="t" style="left:1276px;top:1084px;width:36px">00</div>
<div class="t" style="left:1538px;top:1084px;width:36px">17</div>
<div class="t" style="left:1576px;top:1084px;width:36px">00</div>
<div class="t" style="left:1840px;top:1084px;width:36px">17</div>
<div class="t" style="left:1878px;top:1084px;width:36px">00</div>
<div class="t" style="left:2140px;top:1084px;width:36px">17</div>
<div class="t" style="left:2178px;top:1084px;width:36px">00</div>
<div class="t" style="left:74px;top:1136px;width:36px">30</div>
<div class="t" style="left:374px;top:1136px;width:36px">30</div>
<div class="t" style="left:676px;top:1136px;width:36px">30</div>
<div class="t" style="left:976px;top:1136px;width:36px">30</div>
<div class="t" style="left:1276px;top:1136px;width:36px">30</div>
<div class="t" style="left:1576px;top:1136px;width:36px">30</div>
<div class="t" style="left:1878px;top:1136px;width:36px">30</div>
<div class="t" style="left:2178px;top:1136px;width:36px">30</div>
<div class="st s0" style="left:112px;top:462px"></div>
<div class="st s0" style="left:112px;top:720px"></div>
<div class="st s0" style="left:112px;top:978px"></div>
<div class="st s1" style="left:412px;top:978px"></div>
<div class="st s2" style="left:714px;top:462px"></div>
<div class="st s2" style="left:714px;top:720px"></div>
<div class="st s2" style="left:714px;top:978px"></div>
<div class="st s3" style="left:1014px;top:462px"></div>
<div class="st s3" style="left:1014px;top:720px"></div>
<div class="st s3" style="left:1014px;top:978px"></div>
<div class="st s4" style="left:1314px;top:462px"></div>
<div class="st s4" style="left:1314px;top:720px"></div>
<div class="st s4" style="left:1314px;top:978px"></div>
<div class="st s5" style="left:1614px;top:462px"></div>
<div class="st s5" style="left:1614px;top:720px"></div>
<div class="st s5" style="left:1614px;top:978px"></div>
<div class="st s6" style="left:1916px;top:462px"></div>
<div class="st s6" style="left:1916px;top:720px"></div>
<div class="st s6" style="left:1916px;top:978px"></div>
<div class="st s7" style="left:2216px;top:462px"></div>
<div class="st s7" style="left:2216px;top:720px"></div>
<div class="st s7" style="left:2216px;top:978px"></div>
<div class="a" style="left:412px;top:308px;width:16px;height:206px;background:#FFCF9C;box-sizing:border-box;border-left:2px solid #fff;border-top:2px solid #fff;border-bottom:2px solid #fff;overflow:hidden"><div class="a" style="left:10px;top:4px;width:4px;height:32px;background:#C6C6C8"></div><div class="a" style="left:12px;top:47px;width:2px;height:10px;background:#141489"></div><div class="a" style="left:12px;top:75px;width:2px;height:15px;background:#141489"></div><div class="a" style="left:12px;top:106px;width:2px;height:11px;background:#141489"></div><div class="a" style="left:12px;top:135px;width:2px;height:9px;background:#141489"></div></div>
<div class="a" style="left:412px;top:720px;width:16px;height:206px;background:#FFCF9C;box-sizing:border-box;border-left:2px solid #fff;border-top:2px solid #fff;border-bottom:2px solid #fff;overflow:hidden"><div class="a" style="left:12px;top:73px;width:2px;height:16px;background:#141489"></div><div class="a" style="left:12px;top:109px;width:2px;height:8px;background:#141489"></div><div class="a" style="left:12px;top:133px;width:2px;height:12px;background:#141489"></div><div class="a" style="left:12px;top:159px;width:2px;height:16px;background:#141489"></div><div class="a" style="left:12px;top:187px;width:2px;height:9px;background:#141489"></div></div>
<div class="st" style="left:422px;top:462px;width:206px;background-image:linear-gradient(to right,#fff 0 2px,#FFC0CB 2px 8px,#fff 8px 10px,#FFC0CB 10px 16px,#fff 16px 18px,#FFC0CB 18px 24px,#fff 24px 26px,#FFC0CB 26px 34px,#fff 34px 36px,#FFC0CB 36px 42px,#fff 42px 44px,#FFC0CB 44px 50px,#fff 50px 52px,#FFC0CB 52px 58px,#fff 58px 60px,#FFC0CB 60px 68px,#fff 68px 70px,#FFC0CB 70px 76px,#fff 76px 78px,#FFC0CB 78px 84px,#fff 84px 86px,#FFC0CB 86px 94px,#fff 94px 96px,#FFC0CB 96px 102px,#fff 102px 104px,#FFC0CB 104px 110px,#fff 110px 112px,#FFC0CB 112px 118px,#fff 118px 120px,#FFC0CB 120px 128px,#fff 128px 130px,#FFC0CB 130px 136px,#fff 136px 138px,#FFC0CB 138px 144px,#fff 144px 146px,#FFC0CB 146px 154px,#fff 154px 156px,#FFC0CB 156px 162px,#fff 162px 164px,#FFC0CB 164px 170px,#fff 170px 172px,#FFC0CB 172px 178px,#fff 178px 180px,#FFC0CB 180px 188px,#fff 188px 190px,#FFC0CB 190px 196px,#fff 196px 198px,#FFC0CB 198px 204px,#fff 204px 206px)"></div>
<div class="st" style="left:422px;top:720px;width:206px;background-image:linear-gradient(to right,#fff 0 2px,#FFC0CB 2px 8px,#fff 8px 10px,#FFC0CB 10px 16px,#fff 16px 18px,#FFC0CB 18px 24px,#fff 24px 26px,#FFC0CB 26px 34px,#fff 34px 36px,#FFC0CB 36px 42px,#fff 42px 44px,#FFC0CB 44px 50px,#fff 50px 52px,#FFC0CB 52px 58px,#fff 58px 60px,#FFC0CB 60px 68px,#fff 68px 70px,#FFC0CB 70px 76px,#fff 76px 78px,#FFC0CB 78px 84px,#fff 84px 86px,#FFC0CB 86px 94px,#fff 94px 96px,#FFC0CB 96px 102px,#fff 102px 104px,#FFC0CB 104px 110px,#fff 110px 112px,#FFC0CB 112px 118px,#fff 118px 120px,#FFC0CB 120px 128px,#fff 128px 130px,#FFC0CB 130px 136px,#fff 136px 138px,#FFC0CB 138px 144px,#fff 144px 146px,#FFC0CB 146px 154px,#fff 154px 156px,#FFC0CB 156px 162px,#fff 162px 164px,#FFC0CB 164px 170px,#fff 170px 172px,#FFC0CB 172px 178px,#fff 178px 180px,#FFC0CB 180px 188px,#fff 188px 190px,#FFC0CB 190px 196px,#fff 196px 198px,#FFC0CB 198px 204px,#fff 204px 206px)"></div>
<div class="ev p" style="left:412px;top:514px;width:208px;height:52px"><svg class="ic" viewBox="0 0 16 16"><rect width="16" height="16" fill="#fff"/><circle cx="8.5" cy="7.5" r="7" fill="#FFFFD2" stroke="#C9CC9A" stroke-width="1"/><g fill="#9A9A62" shape-rendering="crispEdges"><rect x="8" y="1" width="1" height="1"/><rect x="8" y="12" width="1" height="2"/><rect x="2" y="7" width="2" height="1"/><rect x="13" y="7" width="2" height="1"/><rect x="5" y="2" width="1" height="1"/><rect x="11" y="2" width="1" height="1"/><rect x="3" y="4" width="1" height="1"/><rect x="13" y="4" width="1" height="1"/><rect x="3" y="10" width="1" height="1"/><rect x="13" y="10" width="1" height="1"/><rect x="5" y="12" width="1" height="1"/><rect x="11" y="12" width="1" height="1"/></g><path d="M8.5 2V7.5" stroke="#8A8A56" stroke-width="1"/><path d="M8.5 7.5L4.2 11.8" stroke="#8A8A56" stroke-width="1.1"/><path d="M8.5 7.5L10.6 5.4" stroke="#9A9A62" stroke-width="1"/><path d="M8.5 7.5V10.5" stroke="#B4B486" stroke-width="1"/><rect x="8" y="7" width="1" height="1" fill="#000" shape-rendering="crispEdges"/></svg><span class="tm">11:30</span><span class="l2">Илона Ц. (презен</span></div>
<div class="ev o" style="left:412px;top:566px;width:208px;height:102px"><svg class="ic" viewBox="0 0 16 16" shape-rendering="crispEdges"><rect width="16" height="16" fill="#C6C6C8"/><rect x="3" y="0" width="11" height="16" fill="#66666A"/><rect x="2" y="1" width="13" height="14" fill="#66666A"/><rect x="3" y="1" width="11" height="14" fill="#fff"/><g fill="#004A70"><rect x="4" y="2" width="8" height="1"/><rect x="5" y="4" width="1" height="1"/><rect x="7" y="4" width="3" height="1"/><rect x="5" y="6" width="1" height="1"/><rect x="7" y="6" width="4" height="1"/><rect x="6" y="8" width="1" height="1"/><rect x="8" y="8" width="4" height="1"/><rect x="6" y="10" width="1" height="1"/><rect x="8" y="10" width="4" height="1"/><rect x="5" y="12" width="1" height="1"/><rect x="7" y="12" width="3" height="1"/></g></svg><span class="tm">12:00</span><span class="l2">Илона Ц. (презен</span><span class="l2" style="top:67px">тация шторный с</span></div>
<div class="ev p" style="left:412px;top:668px;width:208px;height:52px"><svg class="ic" viewBox="0 0 16 16"><rect width="16" height="16" fill="#fff"/><circle cx="8.5" cy="7.5" r="7" fill="#FFFFD2" stroke="#C9CC9A" stroke-width="1"/><g fill="#9A9A62" shape-rendering="crispEdges"><rect x="8" y="1" width="1" height="1"/><rect x="8" y="12" width="1" height="2"/><rect x="2" y="7" width="2" height="1"/><rect x="13" y="7" width="2" height="1"/><rect x="5" y="2" width="1" height="1"/><rect x="11" y="2" width="1" height="1"/><rect x="3" y="4" width="1" height="1"/><rect x="13" y="4" width="1" height="1"/><rect x="3" y="10" width="1" height="1"/><rect x="13" y="10" width="1" height="1"/><rect x="5" y="12" width="1" height="1"/><rect x="11" y="12" width="1" height="1"/></g><path d="M8.5 2V7.5" stroke="#8A8A56" stroke-width="1"/><path d="M8.5 7.5L4.2 11.8" stroke="#8A8A56" stroke-width="1.1"/><path d="M8.5 7.5L10.6 5.4" stroke="#9A9A62" stroke-width="1"/><path d="M8.5 7.5V10.5" stroke="#B4B486" stroke-width="1"/><rect x="8" y="7" width="1" height="1" fill="#000" shape-rendering="crispEdges"/></svg><span class="tm">13:00</span><span class="l2">Илона Ц. (презен</span></div>
<div class="ev p" style="left:412px;top:926px;width:208px;height:52px"><svg class="ic" viewBox="0 0 16 16"><rect width="16" height="16" fill="#fff"/><circle cx="8.5" cy="7.5" r="7" fill="#FFFFD2" stroke="#C9CC9A" stroke-width="1"/><g fill="#9A9A62" shape-rendering="crispEdges"><rect x="8" y="1" width="1" height="1"/><rect x="8" y="12" width="1" height="2"/><rect x="2" y="7" width="2" height="1"/><rect x="13" y="7" width="2" height="1"/><rect x="5" y="2" width="1" height="1"/><rect x="11" y="2" width="1" height="1"/><rect x="3" y="4" width="1" height="1"/><rect x="13" y="4" width="1" height="1"/><rect x="3" y="10" width="1" height="1"/><rect x="13" y="10" width="1" height="1"/><rect x="5" y="12" width="1" height="1"/><rect x="11" y="12" width="1" height="1"/></g><path d="M8.5 2V7.5" stroke="#8A8A56" stroke-width="1"/><path d="M8.5 7.5L4.2 11.8" stroke="#8A8A56" stroke-width="1.1"/><path d="M8.5 7.5L10.6 5.4" stroke="#9A9A62" stroke-width="1"/><path d="M8.5 7.5V10.5" stroke="#B4B486" stroke-width="1"/><rect x="8" y="7" width="1" height="1" fill="#000" shape-rendering="crispEdges"/></svg><span class="tm">15:30</span><span class="l2">Илона Ц. (презен</span></div>
<div class="ev o" style="left:112px;top:566px;width:206px;height:50px"><svg class="ic" viewBox="0 0 16 16" shape-rendering="crispEdges"><rect width="16" height="16" fill="#C6C6C8"/><rect x="3" y="0" width="11" height="16" fill="#66666A"/><rect x="2" y="1" width="13" height="14" fill="#66666A"/><rect x="3" y="1" width="11" height="14" fill="#fff"/><g fill="#004A70"><rect x="4" y="2" width="8" height="1"/><rect x="5" y="4" width="1" height="1"/><rect x="7" y="4" width="3" height="1"/><rect x="5" y="6" width="1" height="1"/><rect x="7" y="6" width="4" height="1"/><rect x="6" y="8" width="1" height="1"/><rect x="8" y="8" width="4" height="1"/><rect x="6" y="10" width="1" height="1"/><rect x="8" y="10" width="4" height="1"/><rect x="5" y="12" width="1" height="1"/><rect x="7" y="12" width="3" height="1"/></g></svg><span class="tm">12:00</span><span class="l2">Илона Ц. (презен</span></div>
<div class="ev o" style="left:1314px;top:308px;width:206px;height:52px"><svg class="ic" viewBox="0 0 16 16" shape-rendering="crispEdges"><rect width="16" height="16" fill="#C6C6C8"/><rect x="3" y="0" width="11" height="16" fill="#66666A"/><rect x="2" y="1" width="13" height="14" fill="#66666A"/><rect x="3" y="1" width="11" height="14" fill="#fff"/><g fill="#004A70"><rect x="4" y="2" width="8" height="1"/><rect x="5" y="4" width="1" height="1"/><rect x="7" y="4" width="3" height="1"/><rect x="5" y="6" width="1" height="1"/><rect x="7" y="6" width="4" height="1"/><rect x="6" y="8" width="1" height="1"/><rect x="8" y="8" width="4" height="1"/><rect x="6" y="10" width="1" height="1"/><rect x="8" y="10" width="4" height="1"/><rect x="5" y="12" width="1" height="1"/><rect x="7" y="12" width="3" height="1"/></g></svg><span class="tm">09:30</span><span class="l2">Илона Ц. (презен</span></div>
</body></html>
